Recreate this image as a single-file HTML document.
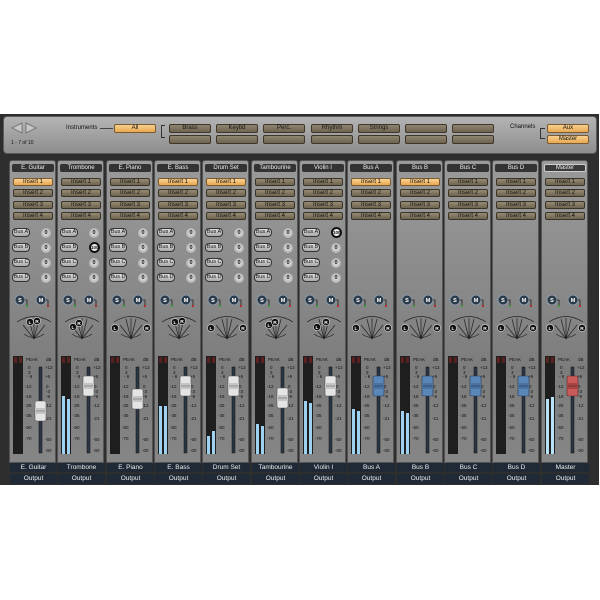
<!DOCTYPE html>
<html><head><meta charset="utf-8"><style>
*{margin:0;padding:0;box-sizing:border-box}
body{width:600px;height:600px;background:#fff;position:relative;overflow:hidden;font-family:"Liberation Sans",sans-serif}
#bg{position:absolute;left:0;top:114px;width:599px;height:371px;background:#2e2e2e}
#top{position:absolute;left:3px;top:116px;width:594px;height:38px;border-radius:4px;background:linear-gradient(#b4b4b4,#8e8e8e);border:1px solid #5a5a5a}
.tb{position:absolute;height:9px;border-radius:2px;background:linear-gradient(#8e8470,#6e6450);border:1px solid #3e3628;font-size:6px;color:#111;text-align:center;line-height:7px}
.tb.on{background:linear-gradient(#f8d090,#e8a850);border-color:#7a5a30}
.lbl{position:absolute;font-size:6px;color:#111}
.s{position:absolute;top:160px;width:47px;height:303px;border-radius:3px 3px 0 0;background:linear-gradient(#9a9a9a,#8a8a8a 40%,#7c7c7c 70%,#868686);border:1px solid #555}
.nm{position:absolute;left:2px;top:3px;width:42px;height:8px;background:#333;border-radius:2px;color:#eee;font-size:6px;text-align:center;line-height:8px}
.in{position:absolute;left:3px;width:40px;height:8px;border-radius:2px;background:linear-gradient(#958a72,#6e6450);border:1px solid #3a3428;font-size:6px;text-align:center;line-height:6px;color:#111}
.in.on{background:linear-gradient(#fbd494,#e8a650);border-color:#7a5a30}
.bus{position:absolute;left:2px;width:18px;height:9px;border-radius:4px;background:linear-gradient(#dedede,#a8a8a8);border:1px solid #333;font-size:5.5px;text-align:center;line-height:7px;color:#111}
.v{position:absolute;left:31px;width:10px;height:10px;border-radius:50%;background:radial-gradient(#e8e8e8,#9a9a9a);font-size:5.5px;font-weight:bold;text-align:center;line-height:10px;color:#111}
.v.h{border:2px solid #111;background:#eee;line-height:7px;font-size:4.5px;width:11px;height:11px}
.bn{position:absolute;left:0;top:302px;width:47px;height:9px;background:#1f2a36;border-radius:2px;color:#eee;font-size:6.5px;text-align:center;line-height:9px}
.out{position:absolute;left:0;top:313px;width:47px;height:10px;background:#1f2a36;border-radius:2px;color:#eee;font-size:6.5px;text-align:center;line-height:10px}
svg{position:absolute;left:0;top:0}
</style></head><body>
<div id="bg"></div>
<div id="top">
<svg width="30" height="14" style="left:7px;top:5px"><polygon points="1,6 11,1 11,11" fill="#c8c8c8" stroke="#777"/><polygon points="15,1 25,6 15,11" fill="#c8c8c8" stroke="#777"/></svg>
<div class="lbl" style="left:7px;top:23px;font-size:5px">1 - 7 of 10</div>
<div class="lbl" style="left:62px;top:8px">Instruments</div>
<div style="position:absolute;left:96px;top:11px;width:13px;height:1px;background:#444"></div>
<div class="tb on" style="left:110px;top:7px;width:42px">All</div>
<div style="position:absolute;left:157px;top:8px;width:4px;height:13px;border:1px solid #333;border-right:none"></div>
<div class="tb" style="left:165px;top:7px;width:42px">Brass</div><div class="tb" style="left:165px;top:18px;width:42px"></div>
<div class="tb" style="left:212px;top:7px;width:42px">Keybd</div><div class="tb" style="left:212px;top:18px;width:42px"></div>
<div class="tb" style="left:259px;top:7px;width:42px">Perc.</div><div class="tb" style="left:259px;top:18px;width:42px"></div>
<div class="tb" style="left:307px;top:7px;width:42px">Rhythm</div><div class="tb" style="left:307px;top:18px;width:42px"></div>
<div class="tb" style="left:354px;top:7px;width:42px">Strings</div><div class="tb" style="left:354px;top:18px;width:42px"></div>
<div class="tb" style="left:401px;top:7px;width:42px"></div><div class="tb" style="left:401px;top:18px;width:42px"></div>
<div class="tb" style="left:448px;top:7px;width:42px"></div><div class="tb" style="left:448px;top:18px;width:42px"></div>
<div class="lbl" style="left:506px;top:7px">Channels</div>
<div style="position:absolute;left:536px;top:11px;width:5px;height:11px;border:1px solid #333;border-right:none"></div>
<div class="tb on" style="left:543px;top:7px;width:42px">Aux</div>
<div class="tb on" style="left:543px;top:18px;width:42px">Master</div>
</div>

<div class="s" style="left:9px"><div class="nm">E. Guitar</div>
<div class="in on" style="top:17px">Insert 1</div><div class="in" style="top:28px">Insert 2</div><div class="in" style="top:40px">Insert 3</div><div class="in" style="top:51px">Insert 4</div>
<div class="bus" style="top:67px">Bus A</div><div class="v" style="top:67px">0</div><div class="bus" style="top:82px">Bus B</div><div class="v" style="top:82px">0</div><div class="bus" style="top:97px">Bus C</div><div class="v" style="top:97px">0</div><div class="bus" style="top:112px">Bus D</div><div class="v" style="top:112px">0</div>
<svg width="47" height="302"><use href="#sm"/><use href="#pa"/><use href="#kL" x="20" y="161"/><use href="#kR" x="27" y="160"/><use href="#sc"/><use href="#fg" y="250"/></svg>
<div class="bn">E. Guitar</div><div class="out">Output</div></div>

<div class="s" style="left:57px"><div class="nm">Trombone</div>
<div class="in" style="top:17px">Insert 1</div><div class="in" style="top:28px">Insert 2</div><div class="in" style="top:40px">Insert 3</div><div class="in" style="top:51px">Insert 4</div>
<div class="bus" style="top:67px">Bus A</div><div class="v" style="top:67px">0</div><div class="bus" style="top:82px">Bus B</div><div class="v h" style="top:81px">100</div><div class="bus" style="top:97px">Bus C</div><div class="v" style="top:97px">0</div><div class="bus" style="top:112px">Bus D</div><div class="v" style="top:112px">0</div>
<svg width="47" height="302"><use href="#sm"/><use href="#pa"/><use href="#kL" x="15" y="166"/><use href="#kR" x="21" y="162"/><use href="#sc"/><rect x="4" y="235" width="3" height="58" fill="#9fd2f0"/><rect x="9" y="238" width="3" height="55" fill="#9fd2f0"/><use href="#fg" y="225"/></svg>
<div class="bn">Trombone</div><div class="out">Output</div></div>

<div class="s" style="left:106px"><div class="nm">E. Piano</div>
<div class="in" style="top:17px">Insert 1</div><div class="in" style="top:28px">Insert 2</div><div class="in" style="top:40px">Insert 3</div><div class="in" style="top:51px">Insert 4</div>
<div class="bus" style="top:67px">Bus A</div><div class="v" style="top:67px">0</div><div class="bus" style="top:82px">Bus B</div><div class="v" style="top:82px">0</div><div class="bus" style="top:97px">Bus C</div><div class="v" style="top:97px">0</div><div class="bus" style="top:112px">Bus D</div><div class="v" style="top:112px">0</div>
<svg width="47" height="302"><use href="#sm"/><use href="#pa"/><use href="#wd"/><use href="#sc"/><use href="#fg" y="238"/></svg>
<div class="bn">E. Piano</div><div class="out">Output</div></div>

<div class="s" style="left:154px"><div class="nm">E. Bass</div>
<div class="in on" style="top:17px">Insert 1</div><div class="in" style="top:28px">Insert 2</div><div class="in" style="top:40px">Insert 3</div><div class="in" style="top:51px">Insert 4</div>
<div class="bus" style="top:67px">Bus A</div><div class="v" style="top:67px">0</div><div class="bus" style="top:82px">Bus B</div><div class="v" style="top:82px">0</div><div class="bus" style="top:97px">Bus C</div><div class="v" style="top:97px">0</div><div class="bus" style="top:112px">Bus D</div><div class="v" style="top:112px">0</div>
<svg width="47" height="302"><use href="#sm"/><use href="#pa"/><use href="#kL" x="20" y="161"/><use href="#kR" x="27" y="160"/><use href="#sc"/><rect x="4" y="245" width="3" height="48" fill="#9fd2f0"/><rect x="9" y="245" width="3" height="48" fill="#9fd2f0"/><use href="#fg" y="225"/></svg>
<div class="bn">E. Bass</div><div class="out">Output</div></div>

<div class="s" style="left:202px"><div class="nm">Drum Set</div>
<div class="in on" style="top:17px">Insert 1</div><div class="in" style="top:28px">Insert 2</div><div class="in" style="top:40px">Insert 3</div><div class="in" style="top:51px">Insert 4</div>
<div class="bus" style="top:67px">Bus A</div><div class="v" style="top:67px">0</div><div class="bus" style="top:82px">Bus B</div><div class="v" style="top:82px">0</div><div class="bus" style="top:97px">Bus C</div><div class="v" style="top:97px">0</div><div class="bus" style="top:112px">Bus D</div><div class="v" style="top:112px">0</div>
<svg width="47" height="302"><use href="#sm"/><use href="#pa"/><use href="#wd"/><use href="#sc"/><rect x="4" y="275" width="3" height="18" fill="#9fd2f0"/><rect x="9" y="270" width="3" height="23" fill="#9fd2f0"/><use href="#fg" y="225"/></svg>
<div class="bn">Drum Set</div><div class="out">Output</div></div>

<div class="s" style="left:251px"><div class="nm">Tambourine</div>
<div class="in" style="top:17px">Insert 1</div><div class="in" style="top:28px">Insert 2</div><div class="in" style="top:40px">Insert 3</div><div class="in" style="top:51px">Insert 4</div>
<div class="bus" style="top:67px">Bus A</div><div class="v" style="top:67px">0</div><div class="bus" style="top:82px">Bus B</div><div class="v" style="top:82px">0</div><div class="bus" style="top:97px">Bus C</div><div class="v" style="top:97px">0</div><div class="bus" style="top:112px">Bus D</div><div class="v" style="top:112px">0</div>
<svg width="47" height="302"><use href="#sm"/><use href="#pa"/><use href="#kL" x="17" y="164"/><use href="#kR" x="23" y="161"/><use href="#sc"/><rect x="4" y="263" width="3" height="30" fill="#9fd2f0"/><rect x="9" y="265" width="3" height="28" fill="#9fd2f0"/><use href="#fg" y="237"/></svg>
<div class="bn">Tambourine</div><div class="out">Output</div></div>

<div class="s" style="left:299px"><div class="nm">Violin I</div>
<div class="in" style="top:17px">Insert 1</div><div class="in" style="top:28px">Insert 2</div><div class="in" style="top:40px">Insert 3</div><div class="in" style="top:51px">Insert 4</div>
<div class="bus" style="top:67px">Bus A</div><div class="v h" style="top:66px">100</div><div class="bus" style="top:82px">Bus B</div><div class="v" style="top:82px">0</div><div class="bus" style="top:97px">Bus C</div><div class="v" style="top:97px">0</div><div class="bus" style="top:112px">Bus D</div><div class="v" style="top:112px">0</div>
<svg width="47" height="302"><use href="#sm"/><use href="#pa"/><use href="#kL" x="17" y="166"/><use href="#kR" x="26" y="161"/><use href="#sc"/><rect x="4" y="240" width="3" height="53" fill="#9fd2f0"/><rect x="9" y="242" width="3" height="51" fill="#9fd2f0"/><use href="#fg" y="225"/></svg>
<div class="bn">Violin I</div><div class="out">Output</div></div>

<div class="s" style="left:347px"><div class="nm">Bus A</div>
<div class="in on" style="top:17px">Insert 1</div><div class="in" style="top:28px">Insert 2</div><div class="in" style="top:40px">Insert 3</div><div class="in" style="top:51px">Insert 4</div>
<svg width="47" height="302"><use href="#sm"/><use href="#pa"/><use href="#wd"/><use href="#sc"/><rect x="4" y="248" width="3" height="45" fill="#9fd2f0"/><rect x="9" y="250" width="3" height="43" fill="#9fd2f0"/><use href="#fb" y="225"/></svg>
<div class="bn">Bus A</div><div class="out">Output</div></div>

<div class="s" style="left:396px"><div class="nm">Bus B</div>
<div class="in on" style="top:17px">Insert 1</div><div class="in" style="top:28px">Insert 2</div><div class="in" style="top:40px">Insert 3</div><div class="in" style="top:51px">Insert 4</div>
<svg width="47" height="302"><use href="#sm"/><use href="#pa"/><use href="#wd"/><use href="#sc"/><rect x="4" y="250" width="3" height="43" fill="#9fd2f0"/><rect x="9" y="252" width="3" height="41" fill="#9fd2f0"/><use href="#fb" y="225"/></svg>
<div class="bn">Bus B</div><div class="out">Output</div></div>

<div class="s" style="left:444px"><div class="nm">Bus C</div>
<div class="in" style="top:17px">Insert 1</div><div class="in" style="top:28px">Insert 2</div><div class="in" style="top:40px">Insert 3</div><div class="in" style="top:51px">Insert 4</div>
<svg width="47" height="302"><use href="#sm"/><use href="#pa"/><use href="#wd"/><use href="#sc"/><use href="#fb" y="225"/></svg>
<div class="bn">Bus C</div><div class="out">Output</div></div>

<div class="s" style="left:492px"><div class="nm">Bus D</div>
<div class="in" style="top:17px">Insert 1</div><div class="in" style="top:28px">Insert 2</div><div class="in" style="top:40px">Insert 3</div><div class="in" style="top:51px">Insert 4</div>
<svg width="47" height="302"><use href="#sm"/><use href="#pa"/><use href="#wd"/><use href="#sc"/><use href="#fb" y="225"/></svg>
<div class="bn">Bus D</div><div class="out">Output</div></div>

<div class="s" style="left:541px"><div class="nm" style="background:#3a3a3a;border:1px solid #ccc;line-height:6px">Master</div>
<div class="in" style="top:17px">Insert 1</div><div class="in" style="top:28px">Insert 2</div><div class="in" style="top:40px">Insert 3</div><div class="in" style="top:51px">Insert 4</div>
<svg width="47" height="302"><use href="#sm"/><use href="#pa"/><use href="#wd"/><use href="#sc"/><rect x="4" y="238" width="3" height="55" fill="#b8e2f8"/><rect x="9" y="236" width="3" height="57" fill="#b8e2f8"/><use href="#fr" y="225"/></svg>
<div class="bn">Master</div><div class="out">Output</div></div>

<svg width="0" height="0" style="position:absolute">
<defs>
<g id="kL"><circle cx="0" cy="0" r="3.6" fill="#111" stroke="#ddd" stroke-width=".6"/><text x="0" y="1.8" font-size="4.8" fill="#fff" text-anchor="middle" font-weight="bold" font-family="Liberation Sans">L</text></g>
<g id="kR"><circle cx="0" cy="0" r="3.6" fill="#111" stroke="#ddd" stroke-width=".6"/><text x="0" y="1.8" font-size="4.8" fill="#fff" text-anchor="middle" font-weight="bold" font-family="Liberation Sans">R</text></g>
<g id="sm">
<circle cx="10" cy="139" r="5" fill="#2b3a48" stroke="#8a98a6" stroke-width="1"/><text x="10" y="141" font-size="5.5" fill="#fff" text-anchor="middle" font-weight="bold" font-family="Liberation Sans">S</text>
<path d="M15,139h2v5" stroke="#222" fill="none" stroke-width=".8"/><rect x="16" y="144" width="2" height="2" fill="#3a9a3a"/>
<circle cx="31" cy="139" r="5" fill="#2b3a48" stroke="#8a98a6" stroke-width="1"/><text x="31" y="141" font-size="5.5" fill="#fff" text-anchor="middle" font-weight="bold" font-family="Liberation Sans">M</text>
<path d="M36,139h2v5" stroke="#222" fill="none" stroke-width=".8"/><rect x="37" y="144" width="2" height="2" fill="#b03030"/>
</g>
<g id="pa" stroke="#222" stroke-width=".7" fill="none">
<path d="M7,161 Q24,150 41,161"/><path d="M14,173 Q24,180 34,173"/>
<path d="M24,178 L13,164 M24,178 L19,158 M24,178 L24,157 M24,178 L29,158 M24,178 L35,164"/>
</g>
<g id="wd"><use href="#kL" x="8" y="167"/><use href="#kR" x="40" y="167"/></g>
<g id="sc" font-family="Liberation Sans" font-size="4.5" fill="#111">
<rect x="3" y="195" width="5" height="98" fill="#1e1e1e"/><rect x="8" y="195" width="5" height="98" fill="#1e1e1e"/>
<rect x="4" y="196" width="3" height="6" fill="#5a2020"/><rect x="9" y="196" width="3" height="6" fill="#5a2020"/>
<text x="16" y="200">PEAK</text><text x="36" y="200">dB</text>
<text x="18" y="208">0</text><text x="18" y="213">3</text><text x="17" y="217">- 6</text><text x="15" y="227">-12</text><text x="15" y="237">-18</text><text x="15" y="246">-25</text><text x="15" y="256">-35</text><text x="15" y="268">-50</text><text x="15" y="279">-70</text>
<text x="35" y="208">+12</text><text x="35" y="217">+6</text><text x="36" y="227">0</text><text x="36" y="232">-3</text><text x="36" y="237">-9</text><text x="35" y="246">-12</text><text x="35" y="259">-21</text><text x="35" y="280">-50</text><text x="35" y="291">-00</text>
<rect x="29" y="206" width="3" height="86" fill="#2a3644" stroke="#111" stroke-width=".5"/>
</g>
<g id="fg"><rect x="25" y="-10" width="11" height="20" rx="1.5" fill="#e4e4e4" stroke="#555" stroke-width=".6"/><rect x="25" y="-3" width="11" height="6" fill="#c4c4c4"/><line x1="26" y1="0" x2="35" y2="0" stroke="#666" stroke-width=".6"/></g>
<g id="fb"><rect x="25" y="-10" width="11" height="20" rx="1.5" fill="#5a86b8" stroke="#2a3a55" stroke-width=".6"/><rect x="25" y="-3" width="11" height="6" fill="#4a72a0"/><line x1="26" y1="0" x2="35" y2="0" stroke="#2a3a55" stroke-width=".6"/></g>
<g id="fr"><rect x="25" y="-10" width="11" height="20" rx="1.5" fill="#c85a5a" stroke="#552a2a" stroke-width=".6"/><rect x="25" y="-3" width="11" height="6" fill="#a84444"/><line x1="26" y1="0" x2="35" y2="0" stroke="#552a2a" stroke-width=".6"/></g>
</defs></svg>
</body></html>
